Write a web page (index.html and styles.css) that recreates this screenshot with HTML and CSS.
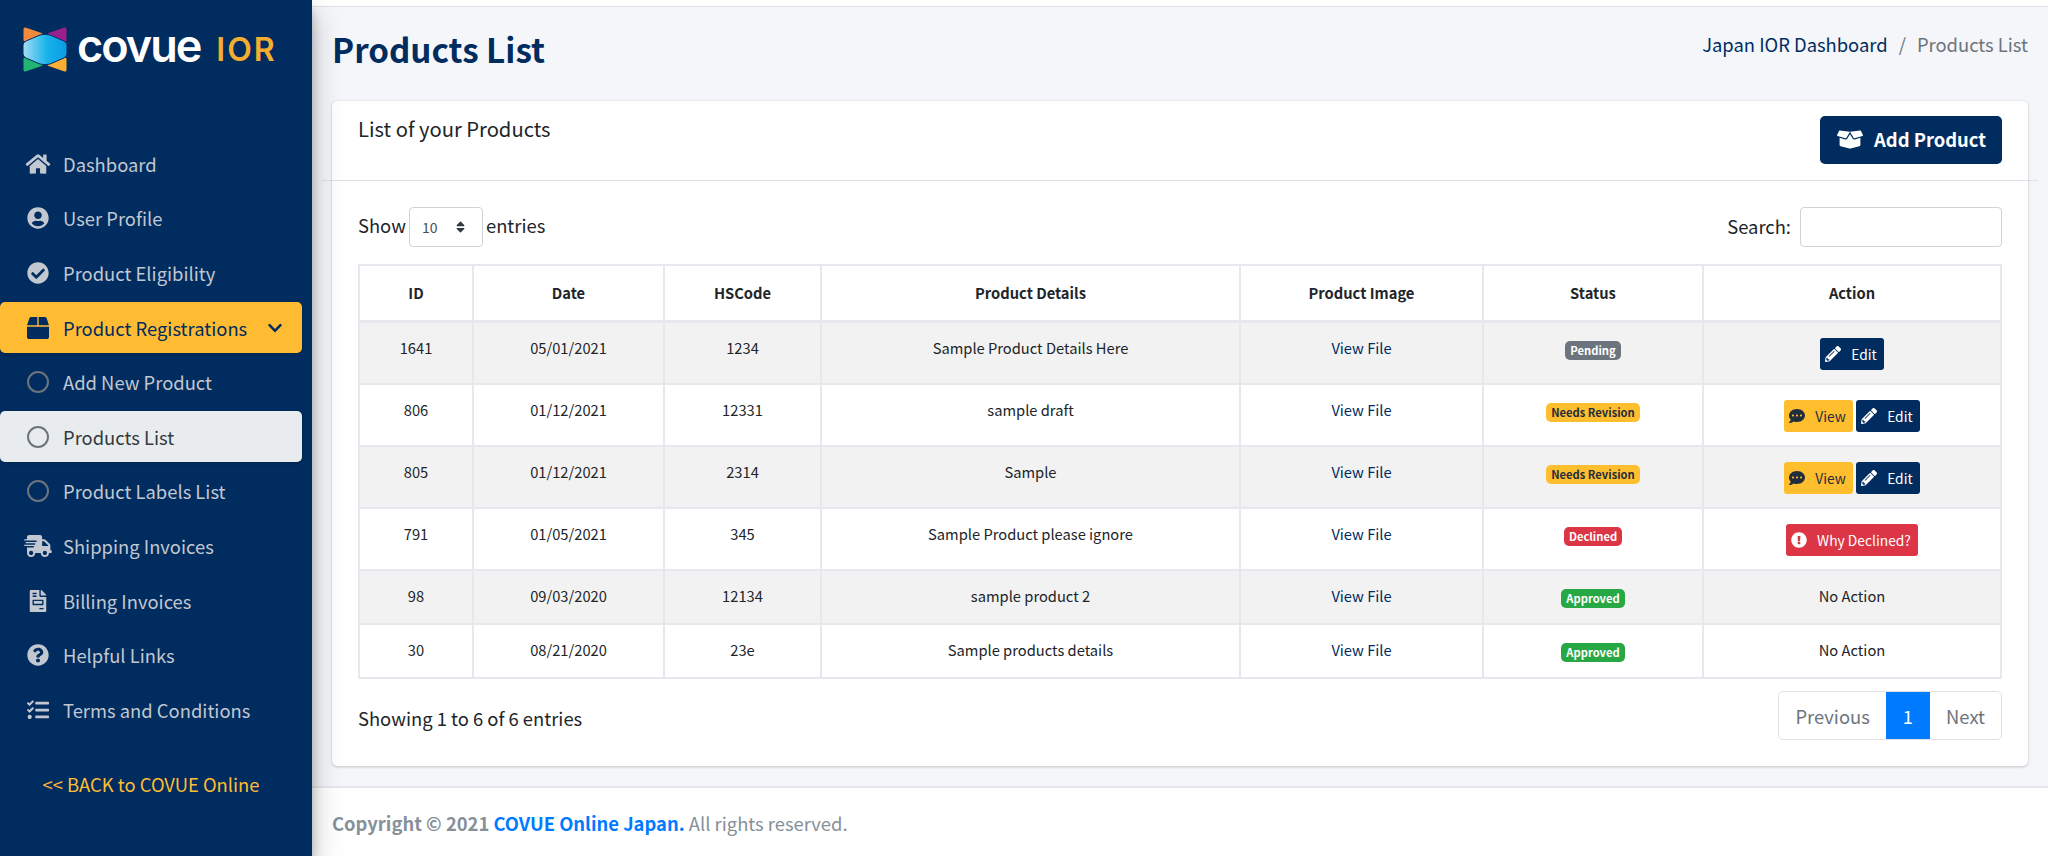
FILE: index.html
```html
<!DOCTYPE html>
<html>
<head>
  <meta charset="utf-8">
  <title>Products List</title>
  <link rel="stylesheet" href="styles.css">
</head>
<body>

  <!-- icon sprite -->
  <svg class="sprite" xmlns="http://www.w3.org/2000/svg">
    <symbol id="i-home" viewBox="0 0 576 512"><path d="M280.37 148.26L96 300.11V464a16 16 0 0 0 16 16l112.06-.29a16 16 0 0 0 15.92-16V368a16 16 0 0 1 16-16h64a16 16 0 0 1 16 16v95.64a16 16 0 0 0 16 16.05L464 480a16 16 0 0 0 16-16V300L295.67 148.26a12.19 12.19 0 0 0-15.3 0zM571.6 251.47L488 182.56V44.05a12 12 0 0 0-12-12h-56a12 12 0 0 0-12 12v72.61L318.47 43a48 48 0 0 0-61 0L4.34 251.47a12 12 0 0 0-1.6 16.9l25.5 31A12 12 0 0 0 45.15 301l235.22-193.74a12.19 12.19 0 0 1 15.3 0L530.9 301a12 12 0 0 0 16.9-1.6l25.5-31a12 12 0 0 0-1.7-16.93z"/></symbol>
    <symbol id="i-user" viewBox="0 0 496 512"><path d="M248 8C111 8 0 119 0 256s111 248 248 248 248-111 248-248S385 8 248 8zm0 96c48.6 0 88 39.4 88 88s-39.4 88-88 88-88-39.4-88-88 39.4-88 88-88zm0 344c-58.7 0-111.3-26.6-146.5-68.2 18.8-35.4 55.6-59.8 98.5-59.8 2.4 0 4.8.4 7.1 1.1 13 4.2 26.6 6.9 40.9 6.9 14.3 0 28-2.7 40.9-6.9 2.3-.7 4.7-1.1 7.1-1.1 42.9 0 79.7 24.4 98.5 59.8C359.3 421.4 306.7 448 248 448z"/></symbol>
    <symbol id="i-check" viewBox="0 0 512 512"><path d="M504 256c0 136.967-111.033 248-248 248S8 392.967 8 256 119.033 8 256 8s248 111.033 248 248zM227.314 387.314l184-184c6.248-6.248 6.248-16.379 0-22.627l-22.627-22.627c-6.248-6.249-16.379-6.249-22.628 0L216 308.118l-70.059-70.059c-6.248-6.248-16.379-6.248-22.628 0l-22.627 22.627c-6.248 6.248-6.248 16.379 0 22.627l104 104c6.249 6.249 16.379 6.249 22.628.001z"/></symbol>
    <symbol id="i-box" viewBox="0 0 512 512"><path d="M509.5 184.6L458.9 32.8C452.4 13.2 434.1 0 413.4 0H272v192h238.7c-.4-2.5-.4-5-1.2-7.4zM240 0H98.6c-20.7 0-39 13.2-45.5 32.8L2.5 184.6c-.8 2.4-.8 4.9-1.2 7.4H240V0zM0 224v240c0 26.5 21.5 48 48 48h416c26.5 0 48-21.5 48-48V224H0z"/></symbol>
    <symbol id="i-chevron" viewBox="0 0 448 512"><path d="M207.029 381.476L12.686 187.132c-9.373-9.373-9.373-24.569 0-33.941l22.667-22.667c9.357-9.357 24.522-9.375 33.901-.04L224 284.505l154.745-154.021c9.379-9.335 24.544-9.317 33.901.04l22.667 22.667c9.373 9.373 9.373 24.569 0 33.941L240.971 381.476c-9.373 9.372-24.569 9.372-33.942 0z"/></symbol>
    <symbol id="i-truck" viewBox="0 0 640 512"><path d="M624 352h-16V243.9c0-12.7-5.1-24.9-14.1-33.9L494 110.1c-9-9-21.2-14.1-33.9-14.1H416V48c0-26.5-21.5-48-48-48H112C85.5 0 64 21.5 64 48v48H8c-4.4 0-8 3.6-8 8v16c0 4.4 3.6 8 8 8h272c4.4 0 8 3.6 8 8v16c0 4.4-3.6 8-8 8H40c-4.4 0-8 3.6-8 8v16c0 4.4 3.6 8 8 8h208c4.4 0 8 3.6 8 8v16c0 4.4-3.6 8-8 8H8c-4.4 0-8 3.6-8 8v16c0 4.4 3.6 8 8 8h208c4.4 0 8 3.6 8 8v16c0 4.4-3.6 8-8 8H64v128c0 53 43 96 96 96s96-43 96-96h128c0 53 43 96 96 96s96-43 96-96h48c8.8 0 16-7.2 16-16v-32c0-8.8-7.2-16-16-16zM160 464c-26.5 0-48-21.5-48-48s21.5-48 48-48 48 21.5 48 48-21.5 48-48 48zm320 0c-26.5 0-48-21.5-48-48s21.5-48 48-48 48 21.5 48 48-21.5 48-48 48zm80-208H416V144h44.1l99.9 99.9V256z"/></symbol>
    <symbol id="i-invoice" viewBox="0 0 384 512"><path d="M288 256H96v64h192v-64zm89-151L279.1 7c-4.5-4.5-10.6-7-17-7H256v128h128v-6.1c0-6.3-2.5-12.4-7-16.9zm-153 31V0H24C10.7 0 0 10.7 0 24v464c0 13.3 10.7 24 24 24h336c13.3 0 24-10.7 24-24V160H248c-13.2 0-24-10.8-24-24zM64 72c0-4.42 3.58-8 8-8h80c4.42 0 8 3.58 8 8v16c0 4.42-3.58 8-8 8H72c-4.42 0-8-3.58-8-8V72zm0 64c0-4.42 3.58-8 8-8h80c4.42 0 8 3.58 8 8v16c0 4.42-3.58 8-8 8H72c-4.42 0-8-3.58-8-8v-16zm256 304c0 4.42-3.58 8-8 8h-80c-4.42 0-8-3.58-8-8v-16c0-4.42 3.58-8 8-8h80c4.42 0 8 3.58 8 8v16zm0-200v96c0 8.84-7.16 16-16 16H80c-8.84 0-16-7.16-16-16v-96c0-8.84 7.16-16 16-16h224c8.84 0 16 7.16 16 16z"/></symbol>
    <symbol id="i-question" viewBox="0 0 512 512"><path d="M504 256c0 136.997-111.043 248-248 248S8 392.997 8 256C8 119.083 119.043 8 256 8s248 111.083 248 248zM262.655 90c-54.497 0-89.255 22.957-116.549 63.758-3.536 5.286-2.353 12.415 2.715 16.258l34.699 26.31c5.205 3.947 12.621 3.008 16.665-2.122 17.864-22.658 30.113-35.797 57.303-35.797 20.429 0 45.698 13.148 45.698 32.958 0 14.976-12.363 22.667-32.534 33.976C247.128 238.528 216 254.941 216 296v4c0 6.627 5.373 12 12 12h56c6.627 0 12-5.373 12-12v-1.333c0-28.462 83.186-29.647 83.186-106.667 0-58.002-60.165-102-116.531-102zM256 338c-25.365 0-46 20.635-46 46 0 25.364 20.635 46 46 46s46-20.636 46-46c0-25.365-20.635-46-46-46z"/></symbol>
    <symbol id="i-tasks" viewBox="0 0 512 512"><path d="M139.61 35.5a12 12 0 0 0-17 0L58.93 98.81l-22.7-22.12a12 12 0 0 0-17 0L3.53 92.41a12 12 0 0 0 0 17l47.59 47.4a12.78 12.78 0 0 0 17.61 0l15.59-15.62L156.52 69a12.09 12.09 0 0 0 .09-17zm0 159.19a12 12 0 0 0-17 0l-63.68 63.72-22.7-22.1a12 12 0 0 0-17 0L3.53 252a12 12 0 0 0 0 17L51 316.5a12.77 12.77 0 0 0 17.6 0l15.7-15.69 72.2-72.22a12 12 0 0 0 .09-16.9zM64 368c-26.49 0-48.59 21.5-48.59 48S37.53 464 64 464a48 48 0 0 0 0-96zm432 16H208a16 16 0 0 0-16 16v32a16 16 0 0 0 16 16h288a16 16 0 0 0 16-16v-32a16 16 0 0 0-16-16zm0-320H208a16 16 0 0 0-16 16v32a16 16 0 0 0 16 16h288a16 16 0 0 0 16-16V80a16 16 0 0 0-16-16zm0 160H208a16 16 0 0 0-16 16v32a16 16 0 0 0 16 16h288a16 16 0 0 0 16-16v-32a16 16 0 0 0-16-16z"/></symbol>
    <symbol id="i-pencil" viewBox="0 0 512 512"><path d="M497.9 142.1l-46.1 46.1c-4.7 4.7-12.3 4.7-17 0l-111-111c-4.7-4.7-4.7-12.3 0-17l46.1-46.1c18.7-18.7 49.1-18.7 67.9 0l60.1 60.1c18.8 18.7 18.8 49.1 0 67.9zM284.2 99.8L21.6 362.4.4 483.9c-2.9 16.4 11.4 30.6 27.8 27.8l121.5-21.3 262.6-262.6c4.7-4.7 4.7-12.3 0-17l-111-111c-4.8-4.7-12.4-4.7-17.1 0zM124.1 339.9c-5.5-5.5-5.5-14.3 0-19.8l154-154c5.5-5.5 14.3-5.5 19.8 0s5.5 14.3 0 19.8l-154 154c-5.5 5.5-14.3 5.5-19.8 0zM88 424h48v36.3l-64.5 11.3-31.1-31.1L51.7 376H88v48z"/></symbol>
    <symbol id="i-comment" viewBox="0 0 512 512"><path d="M256 32C114.6 32 0 125.1 0 240c0 49.6 21.4 95 57 130.7C44.5 421.1 2.7 466 2.2 466.5c-2.2 2.3-2.8 5.7-1.5 8.7S4.8 480 8 480c66.3 0 116-31.8 140.6-51.4 32.7 12.3 69 19.4 107.4 19.4 141.4 0 256-93.1 256-208S397.4 32 256 32zM128 272c-17.7 0-32-14.3-32-32s14.3-32 32-32 32 14.3 32 32-14.3 32-32 32zm128 0c-17.7 0-32-14.3-32-32s14.3-32 32-32 32 14.3 32 32-14.3 32-32 32zm128 0c-17.7 0-32-14.3-32-32s14.3-32 32-32 32 14.3 32 32-14.3 32-32 32z"/></symbol>
    <symbol id="i-alert" viewBox="0 0 512 512"><path d="M504 256c0 136.997-111.043 248-248 248S8 392.997 8 256C8 119.083 119.043 8 256 8s248 111.083 248 248zm-248 50c-25.405 0-46 20.595-46 46s20.595 46 46 46 46-20.595 46-46-20.595-46-46-46zm-43.673-165.346l7.418 136c.347 6.364 5.609 11.346 11.982 11.346h48.546c6.373 0 11.635-4.982 11.982-11.346l7.418-136c.375-6.874-5.098-12.654-11.982-12.654h-63.383c-6.884 0-12.356 5.78-11.981 12.654z"/></symbol>
    <symbol id="i-boxopen" viewBox="0 0 640 512"><path d="M425.7 256c-16.9 0-32.8-9-41.4-23.4L320 126l-64.2 106.6c-8.7 14.5-24.6 23.5-41.5 23.5-4.5 0-9-.6-13.3-1.9L64 215v178c0 14.7 10 27.5 24.2 31l216.2 54.1c10.2 2.5 20.9 2.5 31 0L551.8 424c14.2-3.6 24.2-16.4 24.2-31V215l-137 39.1c-4.3 1.3-8.8 1.9-13.3 1.9zm212.6-112.2L586.8 41c-3.1-6.2-9.8-9.8-16.7-8.9L320 64l91.7 152.1c3.8 6.3 11.4 9.3 18.5 7.3l197.9-56.5c9.9-2.9 14.7-13.9 9.9-23.1zM53.2 41L1.7 143.8c-4.9 9.2 0 20.2 9.8 23l197.9 56.5c7.1 2 14.7-1 18.5-7.3L320 64 69.8 32.1c-6.9-.8-13.5 2.7-16.6 8.9z"/></symbol>
    <symbol id="i-updown" viewBox="0 0 320 512"><path d="M41 288h238c21.4 0 32.1 25.9 17 41L177 448c-9.4 9.4-24.6 9.4-33.9 0L24 329c-15.1-15.1-4.4-41 17-41zm255-105L177 64c-9.4-9.4-24.6-9.4-33.9 0L24 183c-15.1 15.1-4.4 41 17 41h238c21.4 0 32.1-25.9 17-41z"/></symbol>
  </svg>

  <div class="app">

    <!-- Sidebar -->
    <aside class="sidebar">
      <div class="brand">
        <svg class="brand-mark" viewBox="0 0 44 45" xmlns="http://www.w3.org/2000/svg">
          <defs>
            <linearGradient id="hexfill" x1="0" y1="0" x2="1" y2="0">
              <stop offset="0" stop-color="#a5dcf5"/>
              <stop offset="0.55" stop-color="#17b2ea"/>
              <stop offset="1" stop-color="#0a9be4"/>
            </linearGradient>
          </defs>
          <path d="M2 2 L18 7.5 L2 13 Z" fill="#f08a3c" stroke="#f08a3c" stroke-width="3" stroke-linejoin="round"/>
          <path d="M42 2 L26 7.5 L42 13 Z" fill="#9a1f8f" stroke="#9a1f8f" stroke-width="3" stroke-linejoin="round"/>
          <path d="M2 43 L18 37.5 L2 32 Z" fill="#21b573" stroke="#21b573" stroke-width="3" stroke-linejoin="round"/>
          <path d="M42 43 L26 37.5 L42 32 Z" fill="#fbb034" stroke="#fbb034" stroke-width="3" stroke-linejoin="round"/>
          <path d="M0 18 Q0 15.5 3 14 L17 8 Q22 6.5 27 8 L41 14 Q44 15.5 44 18 V27 Q44 29.5 41 31 L27 37 Q22 38.5 17 37 L3 31 Q0 29.5 0 27 Z" fill="url(#hexfill)" stroke="#002c5f" stroke-width="1"/>
        </svg>
        <span class="brand-name">covue</span>
        <span class="brand-sub">IOR</span>
      </div>

      <nav class="nav">
        <a class="nav-item" href="#"><span class="nav-icon"><svg class="ic ic-home"><use href="#i-home"/></svg></span>Dashboard</a>
        <a class="nav-item" href="#"><span class="nav-icon"><svg class="ic"><use href="#i-user"/></svg></span>User Profile</a>
        <a class="nav-item" href="#"><span class="nav-icon"><svg class="ic"><use href="#i-check"/></svg></span>Product Eligibility</a>
        <a class="nav-item open" href="#"><span class="nav-icon"><svg class="ic"><use href="#i-box"/></svg></span>Product Registrations<svg class="nav-caret"><use href="#i-chevron"/></svg></a>
        <a class="nav-item" href="#"><span class="nav-icon"><span class="ring"></span></span>Add New Product</a>
        <a class="nav-item current" href="#"><span class="nav-icon"><span class="ring"></span></span>Products List</a>
        <a class="nav-item" href="#"><span class="nav-icon"><span class="ring"></span></span>Product Labels List</a>
        <a class="nav-item" href="#"><span class="nav-icon"><svg class="ic ic-truck"><use href="#i-truck"/></svg></span>Shipping Invoices</a>
        <a class="nav-item" href="#"><span class="nav-icon"><svg class="ic"><use href="#i-invoice"/></svg></span>Billing Invoices</a>
        <a class="nav-item" href="#"><span class="nav-icon"><svg class="ic"><use href="#i-question"/></svg></span>Helpful Links</a>
        <a class="nav-item" href="#"><span class="nav-icon"><svg class="ic"><use href="#i-tasks"/></svg></span>Terms and Conditions</a>
      </nav>

      <a class="back-link" href="#">&lt;&lt; BACK to COVUE Online</a>
    </aside>

    <div class="main">
      <div class="topstrip"></div>

      <div class="content">
        <div class="page-head">
          <h1>Products List</h1>
          <div class="crumbs">
            <a href="#">Japan IOR Dashboard</a>
            <span class="crumb-sep">/</span>
            <span class="crumb-now">Products List</span>
          </div>
        </div>

        <div class="card">
          <div class="card-head">
            <h3>List of your Products</h3>
            <a class="btn-add" href="#"><svg class="ic-add"><use href="#i-boxopen"/></svg>Add Product</a>
          </div>

          <div class="card-body">
            <div class="tools">
              <div class="len">
                <span class="len-txt">Show</span>
                <span class="len-select">
                  <select><option>10</option><option>25</option><option>50</option></select>
                  <svg class="len-arrows"><use href="#i-updown"/></svg>
                </span>
                <span class="len-txt">entries</span>
              </div>
              <label class="search"><span class="search-txt">Search:</span> <input type="search"></label>
            </div>

            <table class="products">
              <colgroup>
                <col style="width:114px">
                <col style="width:191px">
                <col style="width:157px">
                <col style="width:419px">
                <col style="width:243px">
                <col style="width:220px">
                <col>
              </colgroup>
              <thead>
                <tr>
                  <th>ID</th><th>Date</th><th>HSCode</th><th>Product Details</th><th>Product Image</th><th>Status</th><th>Action</th>
                </tr>
              </thead>
              <tbody>
                <tr class="tall">
                  <td>1641</td><td>05/01/2021</td><td>1234</td><td>Sample Product Details Here</td>
                  <td><a class="file" href="#">View File</a></td>
                  <td><span class="badge grey">Pending</span></td>
                  <td><a class="act navy" href="#"><svg class="act-ic"><use href="#i-pencil"/></svg>Edit</a></td>
                </tr>
                <tr class="tall">
                  <td>806</td><td>01/12/2021</td><td>12331</td><td>sample draft</td>
                  <td><a class="file" href="#">View File</a></td>
                  <td><span class="badge amber">Needs Revision</span></td>
                  <td><a class="act amber" href="#"><svg class="act-ic"><use href="#i-comment"/></svg>View</a> <a class="act navy" href="#"><svg class="act-ic"><use href="#i-pencil"/></svg>Edit</a></td>
                </tr>
                <tr class="tall">
                  <td>805</td><td>01/12/2021</td><td>2314</td><td>Sample</td>
                  <td><a class="file" href="#">View File</a></td>
                  <td><span class="badge amber">Needs Revision</span></td>
                  <td><a class="act amber" href="#"><svg class="act-ic"><use href="#i-comment"/></svg>View</a> <a class="act navy" href="#"><svg class="act-ic"><use href="#i-pencil"/></svg>Edit</a></td>
                </tr>
                <tr class="tall">
                  <td>791</td><td>01/05/2021</td><td>345</td><td>Sample Product please ignore</td>
                  <td><a class="file" href="#">View File</a></td>
                  <td><span class="badge red">Declined</span></td>
                  <td><a class="act red" href="#"><svg class="act-ic"><use href="#i-alert"/></svg>Why Declined?</a></td>
                </tr>
                <tr>
                  <td>98</td><td>09/03/2020</td><td>12134</td><td>sample product 2</td>
                  <td><a class="file" href="#">View File</a></td>
                  <td><span class="badge green">Approved</span></td>
                  <td>No Action</td>
                </tr>
                <tr>
                  <td>30</td><td>08/21/2020</td><td>23e</td><td>Sample products details</td>
                  <td><a class="file" href="#">View File</a></td>
                  <td><span class="badge green">Approved</span></td>
                  <td>No Action</td>
                </tr>
              </tbody>
            </table>

            <div class="table-foot">
              <div class="info">Showing 1 to 6 of 6 entries</div>
              <div class="pager">
                <a href="#">Previous</a>
                <a class="on" href="#">1</a>
                <a href="#">Next</a>
              </div>
            </div>
          </div>
        </div>
      </div>

      <footer class="foot">
        <strong>Copyright &copy; 2021 <a href="#">COVUE Online Japan.</a></strong> All rights reserved.
      </footer>
    </div>
  </div>

</body>
</html>
```

FILE: styles.css
```css
* {
  box-sizing: border-box;
}

html, body {
  height: 100%;
}

body {
  margin: 0;
  background-color: #fff;
  color: #212529;
  font-family: "Noto Sans CJK JP", "Source Sans Pro", "Open Sans", sans-serif;
  font-size: 18.4px;
  line-height: 26px;
  overflow: hidden;
}

a {
  text-decoration: none;
}

.sprite {
  display: none;
}

.app {
  display: flex;
  height: 100vh;
}

/* sidebar */
.sidebar {
  width: 312px;
  flex: none;
  background-color: #002c5f;
  box-shadow: 0 14px 28px rgba(0,0,0,.25), 0 10px 10px rgba(0,0,0,.22);
  position: relative;
  z-index: 2;
}

.brand {
  display: flex;
  align-items: center;
  height: 101px;
  padding: 0 0 2px 23px;
}

.brand-mark {
  width: 44px;
  height: 45px;
  flex: none;
}

.brand-name {
  margin-left: 10px;
  color: #fff;
  font-family: Inter, sans-serif;
  font-size: 45px;
  font-weight: 600;
  line-height: 45px;
  letter-spacing: -2px;
  position: relative;
  top: -4px;
}

.brand-sub {
  margin-left: 16px;
  color: #f5ad2f;
  font-family: Inter, sans-serif;
  font-size: 32px;
  font-weight: 600;
  line-height: 30px;
  letter-spacing: 2px;
}

.nav {
  display: flex;
  flex-direction: column;
  gap: 4px;
  padding-top: 37.5px;
  padding-right: 10px;
}

.nav-item {
  display: flex;
  align-items: center;
  height: 50.6px;
  padding-left: 23px;
  border-radius: 5px;
  color: #c2c7d0;
}

.nav-item.open {
  background-color: #ffbc33;
  color: #002c5f;
  box-shadow: 0 1px 3px rgba(0,0,0,.2);
}

.nav-item.current {
  background-color: #e9ecef;
  color: #343a40;
  box-shadow: 0 1px 3px rgba(0,0,0,.2);
}

.nav-icon {
  width: 30px;
  height: 26px;
  margin-right: 10px;
  flex: none;
  display: flex;
  align-items: center;
  justify-content: center;
}

.ic {
  width: 22px;
  height: 22px;
  fill: currentColor;
}

.ic-home {
  width: 26px;
}

.ic-truck {
  width: 28px;
}

.ring {
  width: 22px;
  height: 22px;
  border: 2px solid #6c757d;
  border-radius: 50%;
}

.nav-caret {
  width: 14px;
  height: 16px;
  margin-left: 21px;
  fill: currentColor;
}

.back-link {
  display: block;
  margin-top: 36px;
  padding-right: 10px;
  text-align: center;
  color: #ffbc33;
}

/* main */
.main {
  flex: 1;
  min-width: 0;
  display: flex;
  flex-direction: column;
}

.topstrip {
  height: 7px;
  flex: none;
  background-color: #fff;
  border-bottom: 1px solid #dee2e6;
}

.content {
  flex: none;
  height: 781px;
  padding: 0 20px 0 20px;
  background-color: #f4f6f9;
  border-bottom: 2px solid #e6e8ec;
}

.page-head {
  display: flex;
  justify-content: space-between;
  height: 94px;
  padding-top: 22px;
}

.page-head h1 {
  margin: 0;
  color: #002c5f;
  font-size: 33.2px;
  font-weight: 700;
  line-height: 40px;
}

.crumbs {
  display: flex;
  gap: 11px;
  line-height: 30px;
}

.crumbs a {
  color: #002c5f;
}

.crumb-sep,
.crumb-now {
  color: #6c757d;
}

.card {
  background-color: #fff;
  border-radius: 5px;
  box-shadow: 0 0 1px rgba(0,0,0,.125), 0 1px 3px rgba(0,0,0,.2);
  height: 665px;
  position: relative;
}

.card-head {
  display: flex;
  justify-content: space-between;
  align-items: flex-start;
  height: 80px;
  margin: 0 -10px;
  padding: 15px 36px 0 36px;
  border-bottom: 1px solid #dcdfe3;
}

.card-head h3 {
  margin: 0;
  font-size: 20.2px;
  font-weight: 400;
  line-height: 26px;
}

.btn-add {
  display: flex;
  align-items: center;
  width: 182px;
  height: 48px;
  padding: 0 0 2px 17px;
  background-color: #002c5f;
  border-radius: 5px;
  color: #fff;
  font-weight: 700;
}

.ic-add {
  width: 26px;
  height: 21px;
  margin-right: 11px;
  fill: currentColor;
}

.card-body {
  padding: 26px 26px 0;
}

.tools {
  display: flex;
  justify-content: space-between;
  align-items: center;
  height: 40px;
}

.len {
  display: flex;
  align-items: center;
  gap: 3px;
}

.len-txt {
  margin-bottom: 4px;
}

.len-select {
  position: relative;
  width: 74px;
  height: 40px;
  display: block;
}

.len-select select {
  width: 100%;
  height: 100%;
  padding-left: 12px;
  appearance: none;
  background: #fff;
  border: 1px solid #ced4da;
  border-radius: 4px;
  color: #495057;
  font-family: inherit;
  font-size: 14px;
}

.len-arrows {
  position: absolute;
  left: 46px;
  top: 13px;
  width: 11px;
  height: 14px;
  fill: #343a40;
}

.search {
  display: flex;
  align-items: center;
  gap: 9px;
}

.search-txt {
  margin-bottom: 2px;
}

.search input {
  width: 202px;
  height: 40px;
  border: 1px solid #ced4da;
  border-radius: 4px;
  background: #fff;
}

.products {
  width: 100%;
  margin-top: 17px;
  table-layout: fixed;
  border-collapse: collapse;
  border: 2px solid #e4e6ea;
  font-size: 14.7px;
  line-height: 20px;
  text-align: center;
}

.products th,
.products td {
  border: 2px solid #e6e8ee;
  padding: 15px 8px 15px;
  vertical-align: top;
}

.products th {
  padding: 17px 8px;
  font-weight: 700;
  border-bottom-width: 3px;
}

.products tbody tr:nth-child(odd) {
  background-color: #f2f2f2;
}

.products tr.tall td {
  padding-bottom: 13px;
}

.file {
  color: #002c5f;
}

.badge {
  display: inline-block;
  padding: 0 5px;
  height: 19px;
  border-radius: 5px;
  font-size: 11.2px;
  font-weight: 700;
  line-height: 18px;
  margin-top: 3px;
  vertical-align: top;
}

.badge.grey { background-color: #6c757d; color: #fff; }
.badge.amber { background-color: #ffbe2e; color: #1f2d3d; }
.badge.red { background-color: #dc3545; color: #fff; }
.badge.green { background-color: #28a745; color: #fff; }

.act {
  display: inline-flex;
  align-items: center;
  height: 32px;
  padding: 0 7px 0 5px;
  border-radius: 3px;
  font-size: 13.8px;
  line-height: 20px;
  vertical-align: top;
}

.act.navy { background-color: #002c5f; color: #fff; }
.act.amber { background-color: #ffbe2e; color: #1f2d3d; }
.act.red { background-color: #dc3545; color: #fff; }

.act-ic {
  width: 16px;
  height: 16px;
  margin-right: 10px;
  fill: currentColor;
}

.table-foot {
  display: flex;
  justify-content: space-between;
  align-items: flex-start;
  margin-top: 12px;
}

.info {
  padding-top: 14px;
}

.pager {
  display: flex;
  height: 49px;
  border: 1px solid #dee2e6;
  border-radius: 5px;
}

.pager a {
  display: flex;
  align-items: center;
  padding: 0 16px;
  color: #6c757d;
}

.pager a.on {
  padding: 0 17px;
  background-color: #007bff;
  color: #fff;
}

.foot {
  flex: 1;
  padding: 22px 20px 0;
  background-color: #fff;
  color: #869099;
}

.foot a {
  color: #007bff;
}
```
